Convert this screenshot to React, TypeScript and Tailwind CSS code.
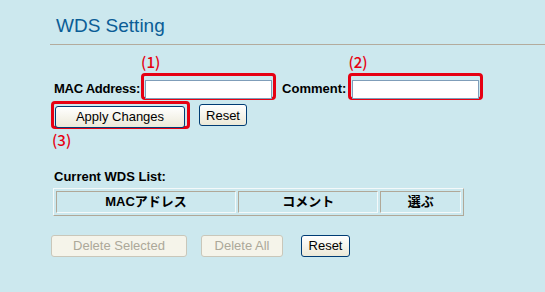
import React from 'react';

const xpButton =
  'h-[22px] rounded-[3px] border border-[#003c74] bg-gradient-to-b from-white to-[#ece9d8] text-[13px] text-black leading-none';
const disabledButton =
  'h-[22px] rounded-[3px] border border-[#c9c7ba] bg-[#f5f4ea] text-[13px] text-[#aca899] leading-none';
const label = 'text-[13px] font-bold text-black leading-[15px]';
const note = 'text-[15px] font-medium text-[#e60012] leading-[16px] font-["Noto_Sans_CJK_JP",sans-serif]';

const Field: React.FC<{ mark: string }> = ({ mark }) => (
  <div className="flex flex-col">
    <span className={note}>{mark}</span>
    <div className="mt-[3px] h-[27px] w-[135px] rounded-[4px] border-[3px] border-[#e60012] p-px">
      <input className="h-full w-full border border-[#7f9db9] bg-white outline-none" />
    </div>
  </div>
);

const HeadCell: React.FC<{ w: string; children: React.ReactNode }> = ({ w, children }) => (
  <th
    className={`${w} h-[20px] border border-t-[#b0a898] border-l-[#b0a898] border-r-[#f4f9fa] border-b-[#f4f9fa] p-0 text-center text-[13px] font-bold text-black`}
  >
    {children}
  </th>
);

export default function App() {
  return (
    <div className='h-[292px] w-full bg-[#cce8ee] pl-[50px] font-["Liberation_Sans","Noto_Sans_CJK_JP",sans-serif]'>
      <div className="border-b border-[#b3ab9d] pt-[15px] pb-[7px]">
        <h1 className="ml-[6px] text-[19px] leading-[22px] text-[#0a5d96]">WDS Setting</h1>
      </div>

      <div className="ml-[4px] mt-[9px] flex items-end">
        <span className={`${label} mb-[4px] tracking-[-0.25px]`}>MAC Address:</span>
        <div className="ml-px">
          <Field mark="(1)" />
        </div>
        <span className={`${label} mb-[4px] ml-[6px]`}>Comment:</span>
        <div className="ml-[2px]">
          <Field mark="(2)" />
        </div>
      </div>

      <div className="ml-px mt-px flex items-center">
        <div className="h-[28px] rounded-[4px] border-[3px] border-[#e60012] pl-px pr-[2px]">
          <button className={`${xpButton} w-[130px]`}>Apply Changes</button>
        </div>
        <button className={`${xpButton} ml-[9px] w-[48px]`}>Reset</button>
      </div>
      <div className={`${note} ml-[2px] mt-[3px]`}>(3)</div>

      <div className={`${label} ml-[4px] mt-[21px]`}>Current WDS List:</div>
      <table className="ml-[3px] mt-[4px] w-[411px] border-separate border-spacing-[2px] border border-t-[#f4f9fa] border-l-[#f4f9fa] border-r-[#b0a898] border-b-[#b0a898]">
        <thead>
          <tr>
            <HeadCell w="w-[181px]">MACアドレス</HeadCell>
            <HeadCell w="w-[141px]">コメント</HeadCell>
            <HeadCell w="w-[81px]">選ぶ</HeadCell>
          </tr>
        </thead>
      </table>

      <div className="ml-px mt-[19px] flex items-center">
        <button disabled className={`${disabledButton} w-[136px]`}>Delete Selected</button>
        <button disabled className={`${disabledButton} ml-[14px] w-[82px]`}>Delete All</button>
        <button className={`${xpButton} ml-[18px] w-[49px]`}>Reset</button>
      </div>
    </div>
  );
}
